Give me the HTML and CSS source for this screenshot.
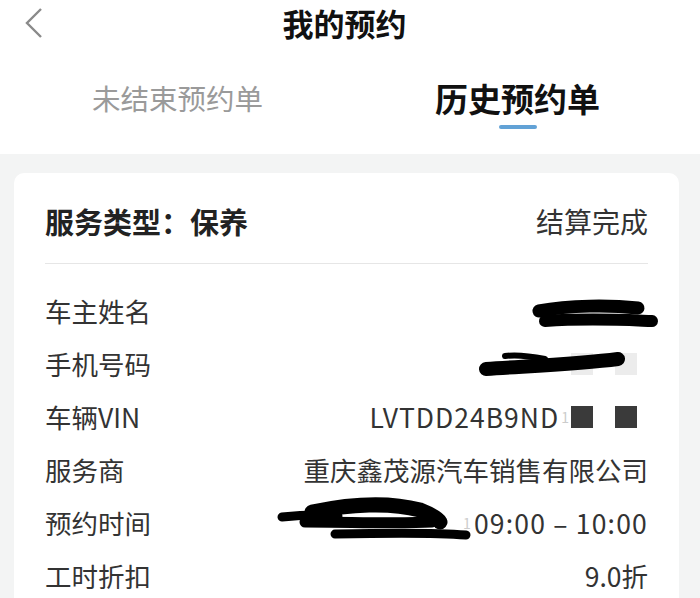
FILE: index.html
```html
<!DOCTYPE html>
<html lang="zh-CN">
<head>
  <meta charset="UTF-8">
  <title>我的预约</title>
  <link rel="stylesheet" href="styles.css">
</head>
<body>

<!-- 顶部导航 -->
<div class="top">
  <div class="nav">
    <svg class="back" width="24" height="34" viewBox="0 0 24 34">
      <path d="M19 3 L5 17 L19 31" fill="none" stroke="#8a8a8a" stroke-width="2.4"/>
    </svg>
    <div class="nav-title">我的预约</div>
  </div>
  <div class="tabs">
    <div class="tab">未结束预约单</div>
    <div class="tab active">历史预约单</div>
  </div>
</div>

<!-- 预约卡片 -->
<div class="card">
  <div class="card-head">
    <div class="card-title">服务类型：保养</div>
    <div class="card-status">结算完成</div>
  </div>
  <div class="rows">
    <div class="row"><span class="label">车主姓名</span><span class="value"></span></div>
    <div class="row"><span class="label">手机号码</span><span class="value"><span class="ghost">1</span><span class="block light"></span><span class="block light"></span></span></div>
    <div class="row"><span class="label">车辆VIN</span><span class="value"><span class="vin">LVTDD24B9ND</span><span class="ghost">1</span><span class="block dark"></span><span class="block dark"></span></span></div>
    <div class="row"><span class="label">服务商</span><span class="value">重庆鑫茂源汽车销售有限公司</span></div>
    <div class="row"><span class="label">预约时间</span><span class="value time"><span class="ghost">1</span>09:00 – 10:00</span></div>
    <div class="row"><span class="label">工时折扣</span><span class="value">9.0折</span></div>
  </div>
</div>

<!-- 打码涂抹 -->
<svg class="scribble" width="700" height="598" viewBox="0 0 700 598">
  <g fill="none" stroke="#000" stroke-linecap="round">
    <path d="M539 311 C570 305 610 305 638 308" stroke-width="13"/>
    <path d="M545 321 C590 318 625 320 652 321" stroke-width="12"/>
    <path d="M486 369 C530 366 580 364 618 359" stroke-width="14"/>
    <path d="M505 356 C520 354 535 357 545 359" stroke-width="6"/>
    <path d="M282 517 C300 515 320 514 338 516" stroke-width="9"/>
    <path d="M312 512 C350 504 390 502 420 510 C430 514 438 518 440 522" stroke-width="15"/>
    <path d="M305 522 C350 522 400 524 432 522" stroke-width="11"/>
    <path d="M335 534 C380 533 430 532 466 535" stroke-width="9"/>
  </g>
</svg>

</body>
</html>
```

FILE: styles.css
```css
body {
  margin: 0;
  width: 700px;
  height: 598px;
  overflow: hidden;
  position: relative;
  background: #f3f4f4;
  font-family: "Noto Sans CJK SC", "Noto Sans", sans-serif;
  color: #333;
}

.top {
  background: #fff;
  height: 154px;
}

.nav {
  height: 50px;
  display: flex;
  align-items: center;
  justify-content: center;
  padding: 0 11px 4px 0;
  box-sizing: border-box;
  position: relative;
}

.back {
  position: absolute;
  left: 22px;
  top: 6px;
}

.nav-title {
  font-size: 31px;
  font-weight: bold;
  color: #111;
  line-height: 36px;
}

.tabs {
  display: flex;
  align-items: center;
  gap: 172px;
  padding-left: 92px;
  height: 96px;
}

.tab {
  font-size: 28.5px;
  color: #9a9a9a;
  line-height: 40px;
  position: relative;
}

.tab.active {
  font-size: 33px;
  font-weight: bold;
  color: #111;
}

.tab.active::after {
  content: "";
  position: absolute;
  left: 50%;
  bottom: -11px;
  width: 38px;
  height: 4px;
  margin-left: -19px;
  border-radius: 2px;
  background: #62a2d6;
}

.card {
  margin: 19px 21px 0 14px;
  padding: 0 31px;
  background: #fff;
  border-radius: 10px 10px 0 0;
  height: 500px;
}

.card-head {
  display: flex;
  justify-content: space-between;
  align-items: center;
  padding: 28px 0 22px;
  border-bottom: 1px solid #e6e6e6;
}

.card-title {
  font-size: 29px;
  font-weight: bold;
  line-height: 40px;
  color: #222;
}

.card-status {
  font-size: 28px;
  line-height: 40px;
}

.rows {
  padding-top: 20px;
}

.row {
  height: 53px;
  display: flex;
  justify-content: space-between;
  align-items: center;
  font-size: 26.5px;
}

.value {
  display: flex;
  align-items: center;
}

.vin {
  letter-spacing: 1px;
}

.time {
  letter-spacing: 1.2px;
}

.ghost {
  color: #ccc;
  font-size: 14px;
  margin: 0 2px;
}

.block {
  width: 22px;
  height: 22px;
}

.block + .block {
  margin-left: 22px;
}

.block:last-child {
  margin-right: 11px;
}

.block.dark {
  background: #3a3a3a;
}

.block.light {
  background: #ececec;
}

.scribble {
  position: absolute;
  left: 0;
  top: 0;
}
```
